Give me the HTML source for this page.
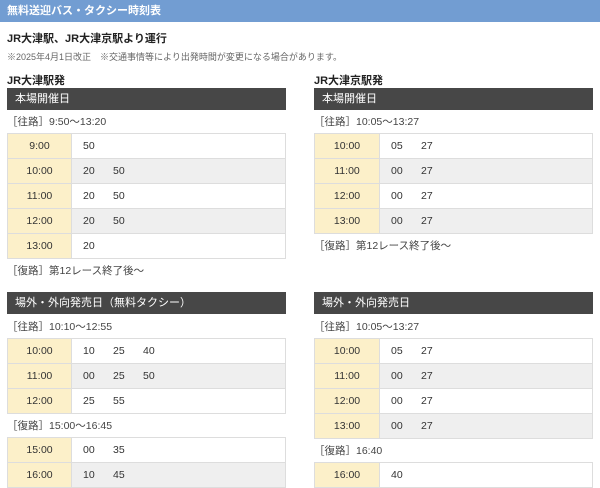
<!DOCTYPE html>
<html><head><meta charset="utf-8"><style>
*{margin:0;padding:0;box-sizing:border-box}
body{width:600px;height:488px;overflow:hidden;background:#fff;font-family:"Liberation Sans","Noto Sans CJK JP",sans-serif;color:#333;position:relative}
.hd{position:absolute;left:0;top:0;width:600px;height:22px;background:#729dd2;color:#fff;font-size:11px;font-weight:bold;line-height:22px;padding-left:7px}
.a{position:absolute;white-space:nowrap}
.t{font-size:11px;font-weight:bold;color:#222}
.n{font-size:9px;color:#666}
.bar{position:absolute;height:22px;background:#474747;color:#fff;font-size:11px;line-height:22px;padding-left:8px}
.r{font-size:10.5px;color:#444}
table{position:absolute;border-collapse:collapse;font-size:10.5px;color:#333}
td{height:25px;border:1px solid #ddd;padding:0}
td.h{background:#fcf0c9;text-align:center}
tr:nth-child(even) td.m{background:#efefef}
td.m span{display:inline-block;width:30px}
td.m{padding-left:11px}
</style></head><body>
<div class="hd">無料送迎バス・タクシー時刻表</div>
<div class="a t" style="left:7px;top:30px">JR大津駅、JR大津京駅より運行</div>
<div class="a n" style="left:7px;top:50px">※2025年4月1日改正　※交通事情等により出発時間が変更になる場合があります。</div>

<div class="a t" style="left:7px;top:72px">JR大津駅発</div>
<div class="bar" style="left:7px;top:88px;width:279px">本場開催日</div>
<div class="a r" style="left:7px;top:114px">［往路］9:50～13:20</div>
<table style="left:7px;top:133px;width:279px">
<tr><td class="h" style="width:64px">9:00</td><td class="m"><span>50</span></td></tr>
<tr><td class="h">10:00</td><td class="m"><span>20</span><span>50</span></td></tr>
<tr><td class="h">11:00</td><td class="m"><span>20</span><span>50</span></td></tr>
<tr><td class="h">12:00</td><td class="m"><span>20</span><span>50</span></td></tr>
<tr><td class="h">13:00</td><td class="m"><span>20</span></td></tr>
</table>
<div class="a r" style="left:7px;top:263px">［復路］第12レース終了後～</div>

<div class="bar" style="left:7px;top:292px;width:279px">場外・外向発売日（無料タクシー）</div>
<div class="a r" style="left:7px;top:319px">［往路］10:10～12:55</div>
<table style="left:7px;top:338px;width:279px">
<tr><td class="h" style="width:64px">10:00</td><td class="m"><span>10</span><span>25</span><span>40</span></td></tr>
<tr><td class="h">11:00</td><td class="m"><span>00</span><span>25</span><span>50</span></td></tr>
<tr><td class="h">12:00</td><td class="m"><span>25</span><span>55</span></td></tr>
</table>
<div class="a r" style="left:7px;top:418px">［復路］15:00～16:45</div>
<table style="left:7px;top:437px;width:279px">
<tr><td class="h" style="width:64px">15:00</td><td class="m"><span>00</span><span>35</span></td></tr>
<tr><td class="h">16:00</td><td class="m"><span>10</span><span>45</span></td></tr>
</table>

<div class="a t" style="left:314px;top:72px">JR大津京駅発</div>
<div class="bar" style="left:314px;top:88px;width:279px">本場開催日</div>
<div class="a r" style="left:314px;top:114px">［往路］10:05～13:27</div>
<table style="left:314px;top:133px;width:279px">
<tr><td class="h" style="width:65px">10:00</td><td class="m"><span>05</span><span>27</span></td></tr>
<tr><td class="h">11:00</td><td class="m"><span>00</span><span>27</span></td></tr>
<tr><td class="h">12:00</td><td class="m"><span>00</span><span>27</span></td></tr>
<tr><td class="h">13:00</td><td class="m"><span>00</span><span>27</span></td></tr>
</table>
<div class="a r" style="left:314px;top:238px">［復路］第12レース終了後～</div>

<div class="bar" style="left:314px;top:292px;width:279px">場外・外向発売日</div>
<div class="a r" style="left:314px;top:319px">［往路］10:05～13:27</div>
<table style="left:314px;top:338px;width:279px">
<tr><td class="h" style="width:65px">10:00</td><td class="m"><span>05</span><span>27</span></td></tr>
<tr><td class="h">11:00</td><td class="m"><span>00</span><span>27</span></td></tr>
<tr><td class="h">12:00</td><td class="m"><span>00</span><span>27</span></td></tr>
<tr><td class="h">13:00</td><td class="m"><span>00</span><span>27</span></td></tr>
</table>
<div class="a r" style="left:314px;top:443px">［復路］16:40</div>
<table style="left:314px;top:462px;width:279px">
<tr><td class="h" style="width:65px">16:00</td><td class="m"><span>40</span></td></tr>
</table>
</body></html>
